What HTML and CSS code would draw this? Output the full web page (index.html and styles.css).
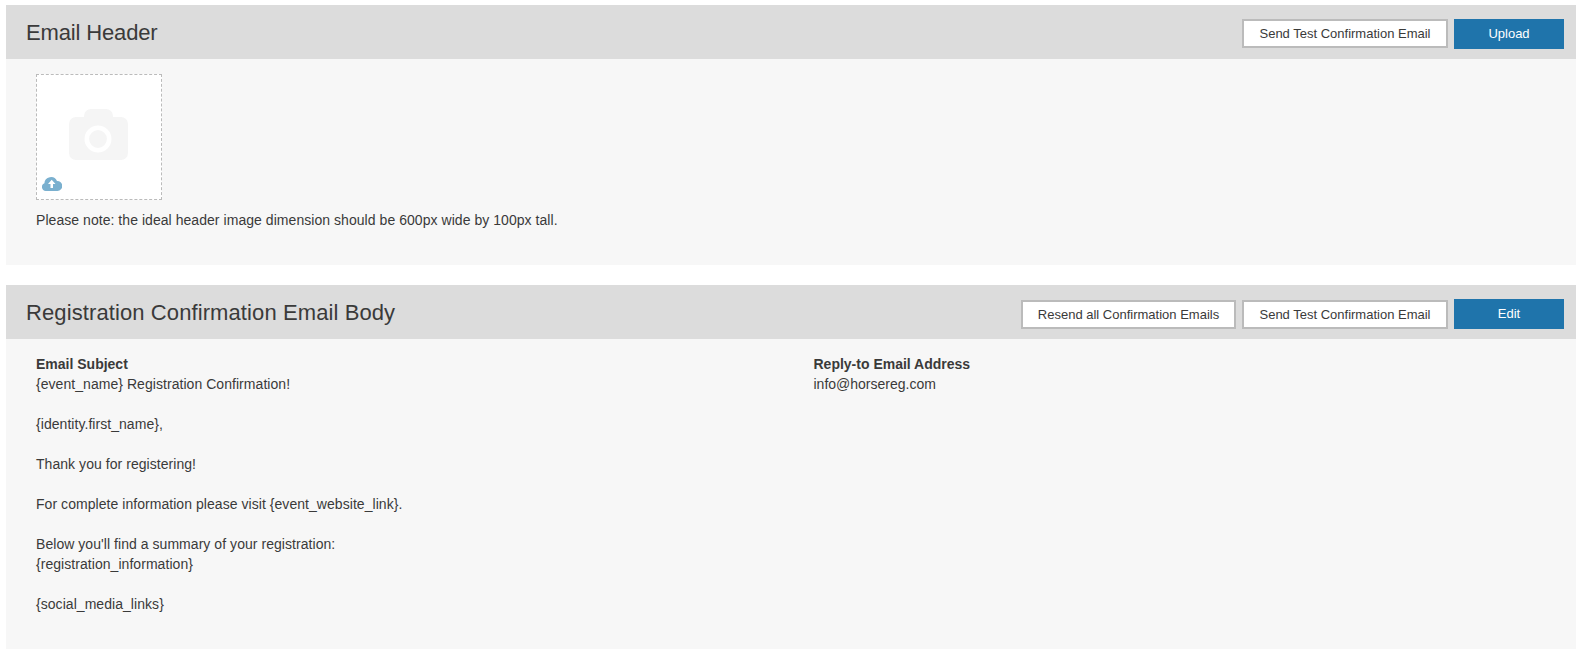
FILE: index.html
```html
<!DOCTYPE html>
<html lang="en">
<head>
<meta charset="utf-8">
<title>Email settings</title>
<link rel="stylesheet" href="styles.css">
</head>
<body>
<section class="panel panel-first">
  <header class="panel-head">
    <h2 class="panel-title title-short">Email Header</h2>
    <div class="actions">
      <button class="btn btn-send">Send Test Confirmation Email</button>
      <button class="btn-primary">Upload</button>
    </div>
  </header>
  <div class="panel-body upload-body">
    <div class="dropzone">
      <svg class="camera" width="59" height="51" viewBox="0 0 59 51">
        <path fill="#f5f5f5" d="M7 8h8V7a7 7 0 0 1 7-7h15a7 7 0 0 1 7 7v1h8a7 7 0 0 1 7 7v29a7 7 0 0 1-7 7H7a7 7 0 0 1-7-7V15a7 7 0 0 1 7-7z"/>
        <circle cx="29" cy="30" r="11.2" fill="none" stroke="#fff" stroke-width="4.6"/>
      </svg>
      <svg class="cloud" width="20" height="15" viewBox="0 0 20 15">
        <path fill="#7ab0cf" d="M4 15a4 4 0 0 1-1.6-7.700A6.600 6.600 0 0 1 15 4.900 5 5 0 0 1 15.500 15z"/>
        <path fill="#fff" d="M9.700 3.800 13.500 8H11v4H8.500V8H6z"/>
      </svg>
    </div>
    <p class="note">Please note: the ideal header image dimension should be 600px wide by 100px tall.</p>
  </div>
</section>
<section class="panel">
  <header class="panel-head">
    <h2 class="panel-title title-long">Registration Confirmation Email Body</h2>
    <div class="actions">
      <button class="btn btn-resend">Resend all Confirmation Emails</button>
      <button class="btn btn-send">Send Test Confirmation Email</button>
      <button class="btn-primary">Edit</button>
    </div>
  </header>
  <div class="panel-body email-body">
    <div class="email-col email-main">
      <strong class="field-label">Email Subject</strong><br>
      {event_name} Registration Confirmation!<br><br>
      {identity.first_name},<br><br>
      Thank you for registering!<br><br>
      For complete information please visit {event_website_link}.<br><br>
      Below you'll find a summary of your registration:<br>
      {registration_information}<br><br>
      {social_media_links}
    </div>
    <div class="email-col">
      <strong class="field-label">Reply-to Email Address</strong><br>
      info@horsereg.com
    </div>
  </div>
</section>
</body>
</html>
```
FILE: styles.css
```css
* { box-sizing: border-box; }
html, body { margin: 0; padding: 0; background: #fff; }
body {
  padding: 5px 16px 9px 6px;
  font-family: "Liberation Sans", Arial, sans-serif;
  font-size: 14px;
  line-height: 20px;
  color: #3a3a3a;
}
.panel { background: #f7f7f7; }
.panel-first { margin-bottom: 20px; }
.panel-head {
  display: flex;
  justify-content: space-between;
  align-items: flex-start;
  height: 54px;
  padding: 14px 12px 0 20px;
  background: #dcdcdc;
}
.panel-title {
  margin: 1px 0 0;
  font-size: 22px;
  line-height: 26px;
  font-weight: 400;
  color: #3a3a3a;
}
.title-short { letter-spacing: -0.15px; }
.title-long { letter-spacing: 0.1px; }
.actions { display: flex; gap: 6px; align-items: flex-start; }
.btn, .btn-primary {
  padding: 0;
  font-family: inherit;
  font-size: 13px;
  line-height: 16px;
  cursor: pointer;
}
.btn {
  height: 29px;
  margin-top: 1px;
  background: #fff;
  border: 2px solid #bbb;
  color: #3a3a3a;
}
.panel-first .btn { margin-top: 0; }
.btn-send { width: 206px; }
.btn-resend { width: 215px; }
.btn-primary {
  width: 110px;
  height: 30px;
  background: #1f74ab;
  border: 0;
  color: #fff;
}
.panel-body { padding: 15px 30px; }
.upload-body { height: 206px; }
.dropzone {
  position: relative;
  display: flex;
  justify-content: center;
  width: 126px;
  height: 126px;
  padding: 34px 2px 0 0;
  background: #fff;
  border: 1px dashed #bbb;
}
.camera { display: block; }
.cloud { position: absolute; left: 5px; bottom: 8px; }
.note { margin: 10px 0 0; letter-spacing: 0.05px; }
.email-body {
  display: grid;
  grid-template-columns: 1fr 1fr;
  column-gap: 45px;
  padding-bottom: 35px;
}
.email-main { letter-spacing: 0.05px; }
.field-label { letter-spacing: 0; }
```
